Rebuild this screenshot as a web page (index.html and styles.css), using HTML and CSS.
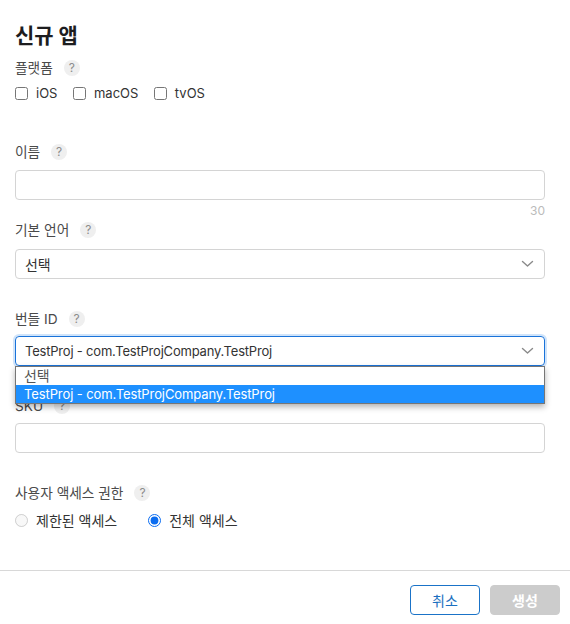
FILE: index.html
```html
<!DOCTYPE html>
<html lang="ko">
<head>
<meta charset="utf-8">
<title>신규 앱</title>
<link rel="stylesheet" href="styles.css">
</head>
<body>
<div class="dialog">
  <div class="content">
    <h1 class="title">신규 앱</h1>

    <div class="label label-platform">플랫폼 <span class="help">?</span></div>
    <div class="options checks">
      <label class="opt"><input type="checkbox" class="check"><span>iOS</span></label>
      <label class="opt"><input type="checkbox" class="check"><span>macOS</span></label>
      <label class="opt"><input type="checkbox" class="check"><span>tvOS</span></label>
    </div>

    <div class="label label-name">이름 <span class="help">?</span></div>
    <div class="input"></div>
    <div class="counter">30</div>

    <div class="label label-lang">기본 언어 <span class="help">?</span></div>
    <div class="select">
      <span class="select-text ko">선택</span>
      <svg class="chev" width="13" height="8" viewBox="0 0 13 8"><path d="M1.5 1.5 L6.5 6 L11.5 1.5" fill="none" stroke="#8a8a8a" stroke-width="1.4" stroke-linecap="round" stroke-linejoin="round"/></svg>
    </div>

    <div class="label label-gap">번들 ID <span class="help">?</span></div>
    <div class="select-wrap">
      <div class="select focused">
        <span class="select-text">TestProj - com.TestProjCompany.TestProj</span>
        <svg class="chev" width="13" height="8" viewBox="0 0 13 8"><path d="M1.5 1.5 L6.5 6 L11.5 1.5" fill="none" stroke="#8a8a8a" stroke-width="1.4" stroke-linecap="round" stroke-linejoin="round"/></svg>
      </div>
      <ul class="menu">
        <li class="menu-item ko">선택</li>
        <li class="menu-item active">TestProj - com.TestProjCompany.TestProj</li>
      </ul>
    </div>

    <div class="label label-gap">SKU <span class="help">?</span></div>
    <div class="input"></div>

    <div class="label label-gap">사용자 액세스 권한 <span class="help">?</span></div>
    <div class="options radios">
      <label class="opt"><input type="radio" name="access" class="radio" disabled><span class="ko">제한된 액세스</span></label>
      <label class="opt"><input type="radio" name="access" class="radio" checked><span class="ko">전체 액세스</span></label>
    </div>
  </div>

  <div class="footer">
    <button class="btn btn-cancel">취소</button>
    <button class="btn btn-create">생성</button>
  </div>
</div>
</body>
</html>
```

FILE: styles.css
```css
html, body {
  margin: 0;
  padding: 0;
  background: #ffffff;
}
body {
  font-family: "Inter", "Noto Sans CJK KR", sans-serif;
  color: #333333;
}
.content {
  padding: 24px 25px 0 15px;
}
.title {
  margin: 0;
  font-size: 21px;
  line-height: 24px;
  font-weight: 700;
  color: #1d1d1f;
}
.label {
  display: flex;
  align-items: center;
  gap: 11px;
  font-size: 13.7px;
  line-height: 18px;
  color: #4a4a4a;
  margin-bottom: 8px;
}
.label-platform {
  margin-top: 11px;
  margin-bottom: 7px;
}
.label-name {
  margin-top: 41px;
  margin-bottom: 9px;
}
.label-lang {
  margin-top: 2px;
  margin-bottom: 10px;
}
.label-gap {
  margin-top: 31px;
}
.help {
  display: inline-flex;
  align-items: center;
  justify-content: center;
  width: 16px;
  height: 16px;
  border-radius: 50%;
  background: #efefef;
  color: #8c8c8c;
  font-size: 12px;
  line-height: 16px;
}
.options {
  display: flex;
  align-items: center;
  gap: 17px;
  height: 18px;
  font-size: 13px;
  color: #333333;
}
.checks {
  gap: 15.5px;
}
.radios {
  margin-top: 9px;
  gap: 31px;
}
.ko {
  font-size: 14px;
}
.opt {
  display: flex;
  align-items: center;
  gap: 8px;
}
.check, .radio {
  margin: 0;
  width: 13px;
  height: 13px;
}
.radio {
  accent-color: #0a6cf0;
}
.input {
  height: 28px;
  border: 1px solid #d4d4d4;
  border-radius: 4px;
  background: #ffffff;
}
.counter {
  margin-top: 3px;
  text-align: right;
  font-size: 12px;
  line-height: 16px;
  color: #bbbbbb;
}
.select {
  height: 28px;
  border: 1px solid #d4d4d4;
  border-radius: 4px;
  display: flex;
  align-items: center;
  justify-content: space-between;
  padding: 0 10px 0 9px;
  font-size: 13px;
  letter-spacing: -0.2px;
  color: #333333;
}
.select.focused {
  border-color: #1a73d9;
  box-shadow: 0 0 0 2px rgba(40, 130, 230, 0.22);
}
.select-wrap {
  position: relative;
}
.menu {
  position: absolute;
  left: 0;
  right: 0;
  top: 100%;
  margin: 0;
  padding: 0;
  list-style: none;
  background: #ffffff;
  border: 1px solid #767676;
  box-shadow: 0 3px 6px rgba(0, 0, 0, 0.3);
  z-index: 2;
}
.menu-item {
  height: 18px;
  line-height: 18px;
  padding: 0 8px;
  font-size: 13px;
  letter-spacing: -0.1px;
  color: #444444;
}
.menu-item.ko {
  font-size: 14px;
  color: #555555;
}
.menu-item.active {
  background: #1e90ff;
  color: #ffffff;
}
.footer {
  margin-top: 41px;
  border-top: 1px solid #d8d8d8;
  padding: 14px 10px 9px;
  display: flex;
  justify-content: flex-end;
  gap: 10px;
}
.btn {
  width: 70px;
  height: 30px;
  border-radius: 4px;
  font-family: "Inter", "Noto Sans CJK KR", sans-serif;
  font-size: 14px;
  padding: 0;
}
.btn-cancel {
  background: #ffffff;
  border: 1px solid #1a73c8;
  color: #1a6fc0;
}
.btn-create {
  background: #cccccc;
  border: 1px solid #cccccc;
  color: #ffffff;
  font-weight: 700;
}
```
